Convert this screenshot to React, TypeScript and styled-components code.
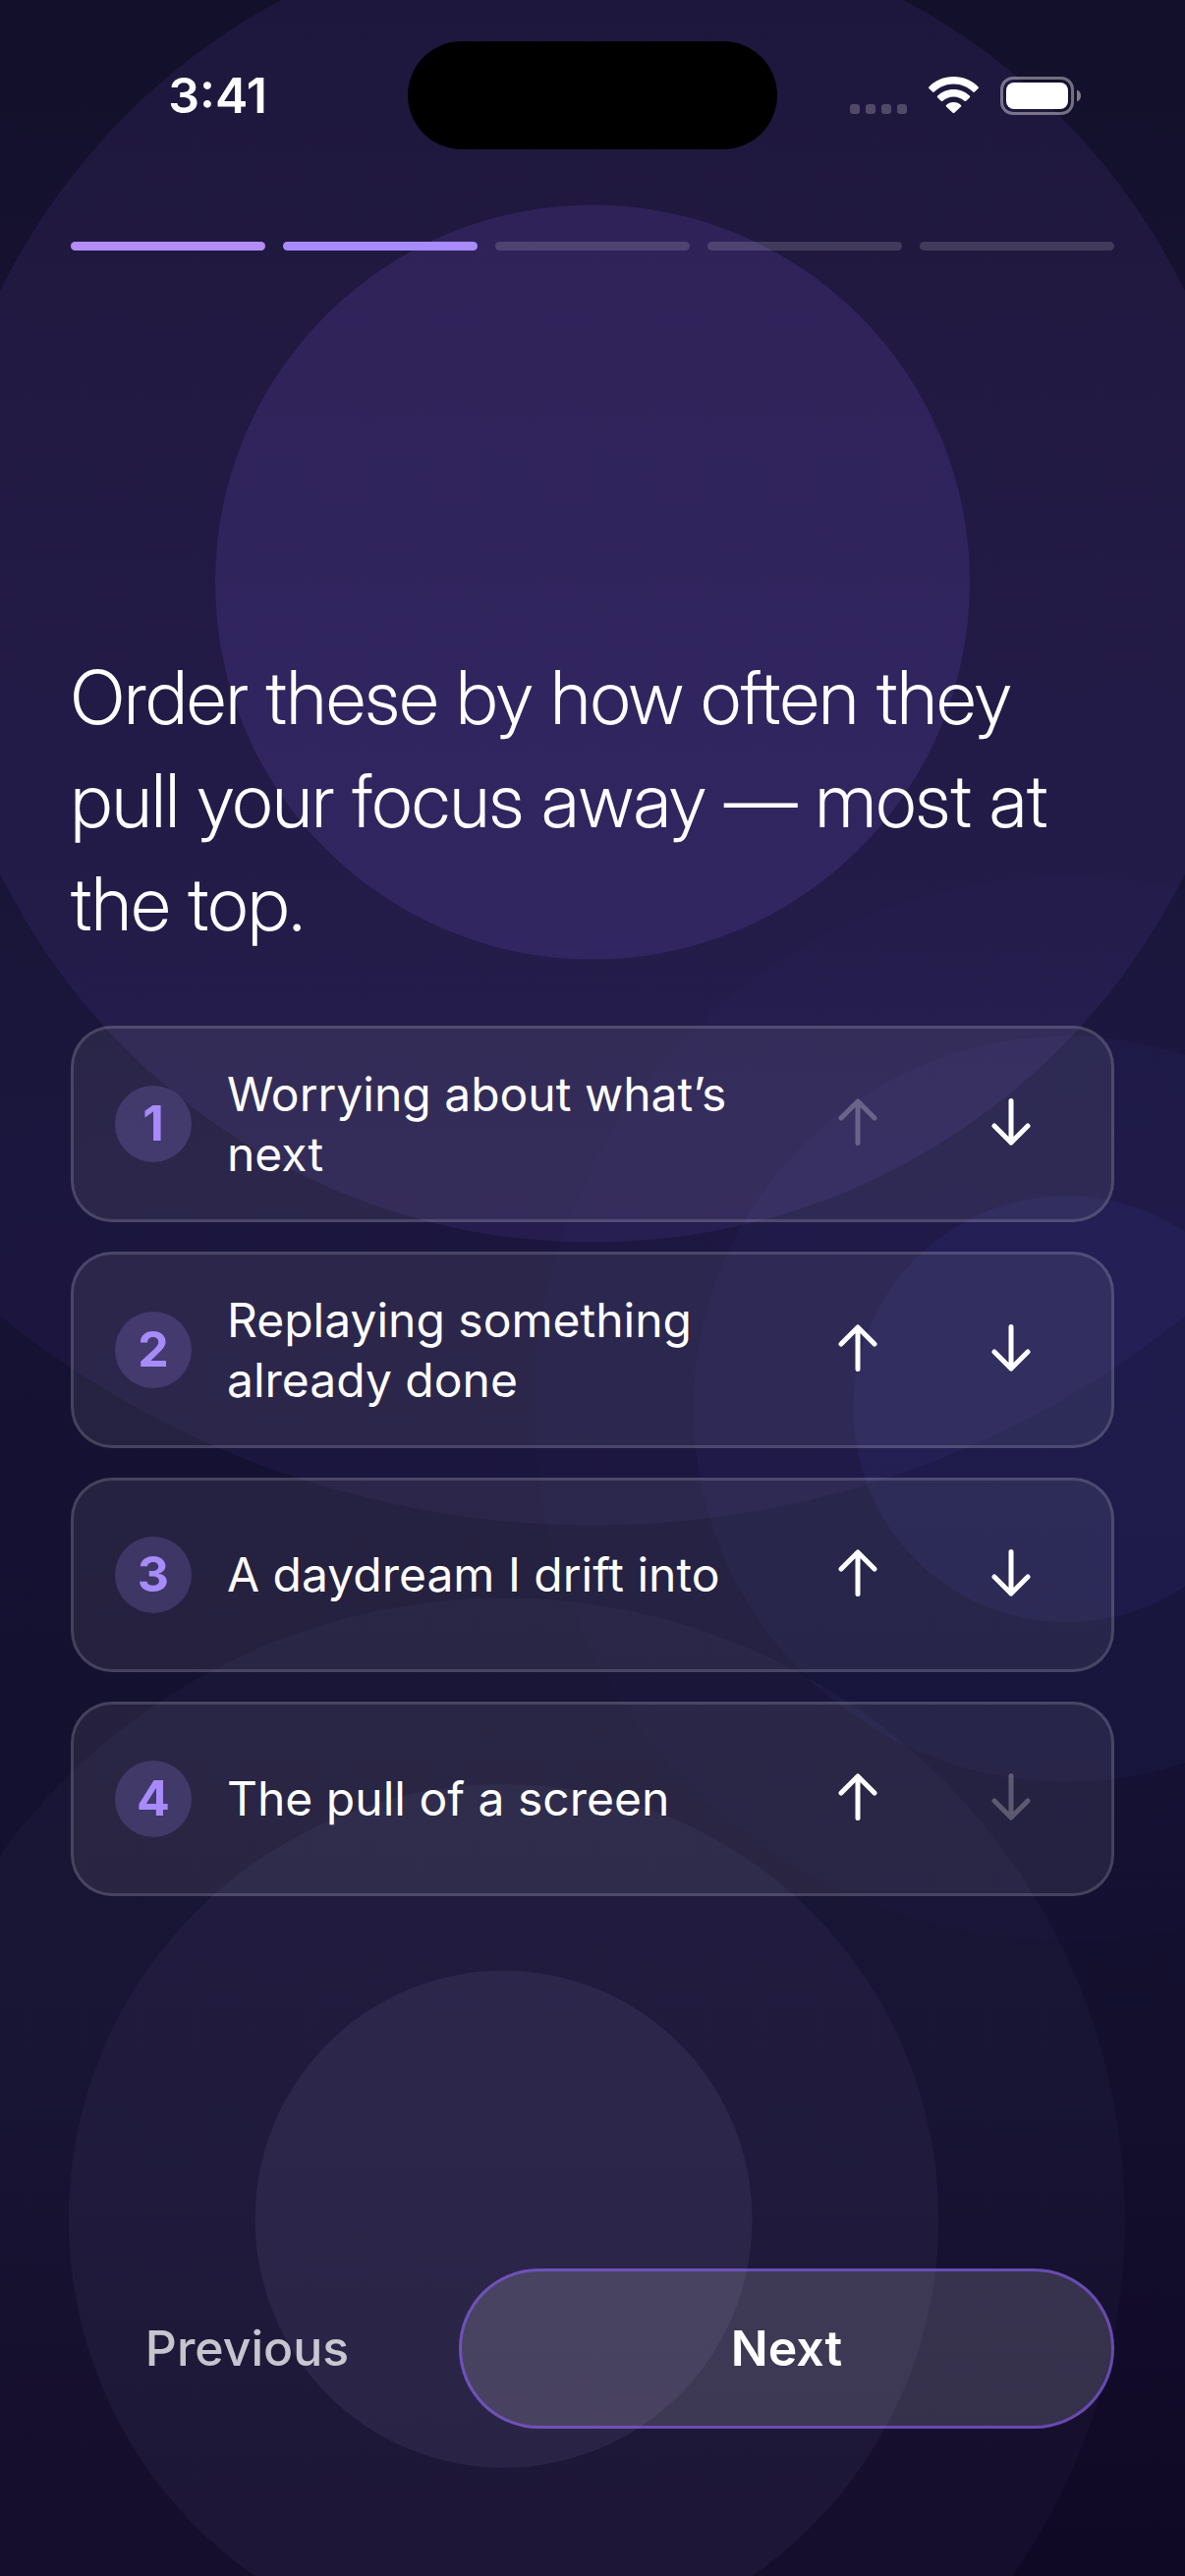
import React, { useState } from "react";
import styled, { createGlobalStyle } from "styled-components";

const GlobalStyle = createGlobalStyle`
  *, *::before, *::after { box-sizing: border-box; }
  body { margin: 0; background: #100926; }
  button { font: inherit; color: inherit; background: none; border: 0; padding: 0; cursor: pointer; }
`;

const Screen = styled.div`
  position: relative;
  min-height: 100vh;
  display: flex;
  flex-direction: column;
  overflow: hidden;
  color: #fff;
  font-family: Inter, "Liberation Sans", sans-serif;
  font-size: 48px;
  line-height: 61px;
  background: linear-gradient(180deg, #0c0b1f 0%, #161234 50%, #130f2d 80%, #100926 100%);
`;

const Backdrop = styled.svg`
  position: absolute;
  inset: 0;
  width: 100%;
  height: 100%;
`;

const Layer = styled.div`
  position: relative;
  flex: 1;
  display: flex;
  flex-direction: column;
`;

const StatusBar = styled.header`
  display: grid;
  grid-template-columns: 1fr 376px 1fr;
  align-items: center;
  padding-top: 42px;
`;

const Clock = styled.time`
  padding-left: 28px;
  text-align: center;
  font-size: 50px;
  font-weight: 600;
`;

const Island = styled.div`
  height: 110px;
  border-radius: 55px;
  background: #000;
`;

const StatusIcons = styled.div`
  display: flex;
  justify-content: center;
  align-items: center;
  gap: 22px;
  padding-right: 32px;
`;

const Progress = styled.div`
  display: flex;
  gap: 18px;
  padding: 94px 72px 0;
`;

const Segment = styled.span<{ $color: string }>`
  flex: 1;
  height: 9px;
  border-radius: 5px;
  background: ${(p) => p.$color};
`;

const Main = styled.main`
  flex: 1;
  display: flex;
  flex-direction: column;
  justify-content: center;
  gap: 72px;
  padding: 22px 72px 0;
`;

const Question = styled.h1`
  margin: 0;
  font-family: "Inter Display", Inter, "Liberation Sans", sans-serif;
  font-size: 75px;
  line-height: 105px;
  font-weight: 300;
`;

const List = styled.ol`
  margin: 0;
  padding: 0;
  list-style: none;
  display: flex;
  flex-direction: column;
  gap: 30px;
`;

const Card = styled.li`
  display: flex;
  align-items: center;
  gap: 36px;
  min-height: 198px;
  padding: 36px 42px;
  border: 3px solid rgba(255, 255, 255, 0.15);
  border-radius: 42px;
  background: rgba(255, 255, 255, 0.07);
`;

const Rank = styled.span`
  flex: none;
  width: 78px;
  height: 78px;
  border-radius: 50%;
  display: grid;
  place-items: center;
  color: #a78bfa;
  font-size: 50px;
  font-weight: 700;
  background: rgba(167, 139, 250, 0.2);
`;

const Label = styled.span`
  flex: 1;
`;

const MoveButton = styled.button`
  flex: none;
  width: 120px;
  height: 120px;
  display: grid;
  place-items: center;

  &:disabled {
    opacity: 0.25;
    cursor: default;
  }
`;

const Footer = styled.footer`
  display: flex;
  gap: 36px;
  padding: 0 72px 150px;
  font-size: 50px;
  font-weight: 600;
`;

const PreviousButton = styled.button`
  flex: 35 1 0;
  height: 163px;
  font-weight: 500;
  color: rgba(255, 255, 255, 0.75);
`;

const NextButton = styled.button`
  flex: 65 1 0;
  height: 163px;
  border-radius: 82px;
  background: rgba(255, 255, 255, 0.14);
  box-shadow: inset 0 0 0 3px rgba(139, 92, 246, 0.6);
`;

const ORBS = [
  { cx: "50%", cy: "22.6%", r: 384, fill: "#8c62f6", alphas: [0.06, 0.09, 0.14] },
  { cx: "90%", cy: "54.7%", r: 217, fill: "#6663f1", alphas: [0.02, 0.05, 0.07] },
  { cx: "42.5%", cy: "86.15%", r: 253, fill: "#c4b8f8", alphas: [0.03, 0.05, 0.08] },
];

const SCALES = [2.5, 1.75, 1];

const SEGMENTS = [
  "#b38cf5",
  "#a78bfa",
  "rgba(255,255,255,0.15)",
  "rgba(255,255,255,0.15)",
  "rgba(255,255,255,0.15)",
];

function Arrow({ down }: { down?: boolean }) {
  return (
    <svg width="40" height="52" viewBox="0 0 40 52" fill="none" stroke="currentColor" strokeWidth="5" strokeLinecap="round" strokeLinejoin="round" aria-hidden="true">
      <path d={down ? "M20 2.5V45M3 28L20 45L37 28" : "M20 45.5V3M3 20L20 3L37 20"} />
    </svg>
  );
}

function SignalDots() {
  return (
    <svg width="58" height="38" viewBox="0 0 58 38" fill="#fff" fillOpacity="0.22" aria-hidden="true">
      {[0, 16, 32, 48].map((x) => (
        <rect key={x} x={x} y="28" width="10" height="10" rx="3" />
      ))}
    </svg>
  );
}

function Wifi() {
  return (
    <svg width="51" height="38" viewBox="0 0 51 38" fill="#fff" aria-hidden="true">
      <path d="M25.5 0C35.4 0 44.300 3.900 50.600 10.400C51.100 10.900 51.100 11.600 50.600 12.100L46.900 15.600C46.400 16.100 45.700 16.100 45.200 15.600C40.100 10.500 33.100 7.500 25.500 7.500C17.900 7.500 10.900 10.500 5.800 15.600C5.300 16.100 4.600 16.100 4.100 15.600L0.400 12.100C-0.100 11.600 -0.100 10.900 0.400 10.400C6.700 3.900 15.600 0 25.500 0Z" />
      <path d="M25.500 13C31.900 13 37.700 15.500 41.900 19.600C42.400 20.100 42.400 20.700 41.900 21.200L38.200 24.700C37.700 25.200 37 25.200 36.500 24.700C33.600 22 29.700 20.400 25.500 20.400C21.300 20.400 17.400 22 14.500 24.700C14 25.200 13.300 25.200 12.800 24.700L9.100 21.200C8.600 20.700 8.600 20.100 9.100 19.600C13.300 15.500 19.100 13 25.500 13Z" />
      <path d="M25.500 26C28.400 26 31.100 27.100 33 28.900C33.500 29.400 33.500 30 33 30.500L26.400 36.800C25.900 37.300 25.100 37.300 24.600 36.800L18 30.500C17.500 30 17.500 29.400 18 28.900C19.900 27.100 22.600 26 25.500 26Z" />
    </svg>
  );
}

function Battery() {
  return (
    <svg width="83" height="39" viewBox="0 0 83 39" fill="none" aria-hidden="true">
      <rect x="1.500" y="1.500" width="72" height="36" rx="11.500" stroke="#fff" strokeOpacity="0.4" strokeWidth="3" />
      <rect x="6" y="6" width="63" height="27" rx="8" fill="#fff" />
      <path d="M78 13.500C80.500 14.500 82 16.800 82 19.500C82 22.200 80.500 24.500 78 25.500Z" fill="#fff" fillOpacity="0.45" />
    </svg>
  );
}

export default function App() {
  const [items, setItems] = useState([
    "Worrying about what’s next",
    "Replaying something already done",
    "A daydream I drift into",
    "The pull of a screen",
  ]);

  const move = (from: number, to: number) => {
    const next = [...items];
    const [picked] = next.splice(from, 1);
    next.splice(to, 0, picked);
    setItems(next);
  };

  return (
    <>
      <GlobalStyle />
      <Screen>
        <Backdrop aria-hidden="true">
          {ORBS.map((orb) =>
            SCALES.map((scale, i) => (
              <circle key={orb.cx + scale} cx={orb.cx} cy={orb.cy} r={orb.r * scale} fill={orb.fill} fillOpacity={orb.alphas[i]} />
            ))
          )}
        </Backdrop>
        <Layer>
          <StatusBar>
            <Clock>3:41</Clock>
            <Island />
            <StatusIcons>
              <SignalDots />
              <Wifi />
              <Battery />
            </StatusIcons>
          </StatusBar>
          <Progress role="progressbar" aria-label="Step" aria-valuemin={0} aria-valuemax={5} aria-valuenow={2}>
            {SEGMENTS.map((color, i) => (
              <Segment key={i} $color={color} />
            ))}
          </Progress>
          <Main>
            <Question>Order these by how often they pull your focus away — most at the top.</Question>
            <List>
              {items.map((item, i) => (
                <Card key={item}>
                  <Rank>{i + 1}</Rank>
                  <Label>{item}</Label>
                  <MoveButton type="button" aria-label={`Move ${item} up`} disabled={i === 0} onClick={() => move(i, i - 1)}>
                    <Arrow />
                  </MoveButton>
                  <MoveButton type="button" aria-label={`Move ${item} down`} disabled={i === items.length - 1} onClick={() => move(i, i + 1)}>
                    <Arrow down />
                  </MoveButton>
                </Card>
              ))}
            </List>
          </Main>
          <Footer>
            <PreviousButton type="button">Previous</PreviousButton>
            <NextButton type="button">Next</NextButton>
          </Footer>
        </Layer>
      </Screen>
    </>
  );
}
